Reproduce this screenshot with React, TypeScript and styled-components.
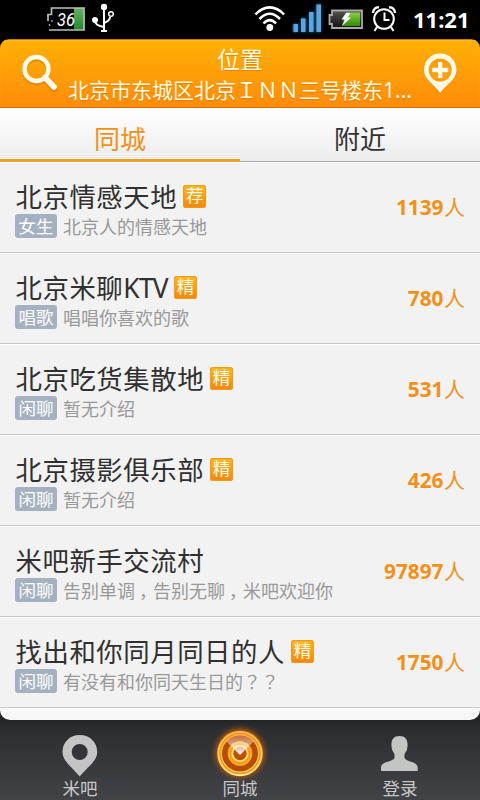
import React from 'react';
import styled, { createGlobalStyle } from 'styled-components';

const Global = createGlobalStyle`
  *, *::before, *::after { box-sizing: border-box; }
  html, body { margin: 0; background: #000; }
  body { font-family: "Noto Sans", "Noto Sans CJK SC", sans-serif; }
`;

const Screen = styled.div`
  width: 480px;
  height: 800px;
  display: flex;
  flex-direction: column;
  overflow: hidden;
  background: #000;
`;

const StatusBar = styled.div`
  flex: none;
  height: 39px;
  display: flex;
  justify-content: space-between;
  svg { display: block; }
`;

const Clock = styled.span`
  width: 72px;
  padding: 4px 0 0 5px;
  color: #fff;
  font: 700 22px/30px "Noto Sans", sans-serif;
  white-space: nowrap;
`;

const StatusGroup = styled.div`
  display: flex;
`;

const Panel = styled.div`
  flex: none;
  height: 681px;
  overflow: hidden;
  border-radius: 9px 9px 0 0;
`;

const Header = styled.header`
  height: 69px;
  display: flex;
  justify-content: space-between;
  border-top: 1px solid #c67a00;
  border-bottom: 1px solid #cf6f00;
  background: linear-gradient(#ffb004, #ff8c0a);
  box-shadow: inset 0 1px 1px #ffbe2c;
`;

const HeaderText = styled.div`
  width: 346px;
  display: flex;
  flex-direction: column;
  align-items: center;
  color: #fffbe0;
  text-shadow: 0 1px 1px rgba(190, 90, 0, 0.45);
`;

const HeaderTitle = styled.div`
  margin-top: 5px;
  font-size: 23px;
  line-height: 28px;
`;

const HeaderAddress = styled.div`
  font-size: 21px;
  line-height: 30px;
  margin-top: 2px;
  white-space: nowrap;
`;

const Tabs = styled.nav`
  height: 54px;
  display: grid;
  grid-template-columns: 1fr 1fr;
  background: linear-gradient(#fff, #ececec);
`;

const Tab = styled.div<{ $active?: boolean }>`
  display: flex;
  align-items: center;
  justify-content: center;
  padding-top: ${(p) => (p.$active ? 10 : 8)}px;
  font-size: 26px;
  line-height: 38px;
  color: ${(p) => (p.$active ? '#f39019' : '#333')};
  border-bottom: ${(p) => (p.$active ? '3px solid #e9a02f' : '1px solid #a9a9a9')};
`;

const List = styled.main`
  height: 558px;
  overflow: hidden;
  border-radius: 0 0 10px 10px;
  background: #f8f8f8;
`;

const Row = styled.article`
  height: 91px;
  display: flex;
  justify-content: space-between;
  align-items: center;
  padding: 0 15px;
  border-top: 1px solid #fff;
  border-bottom: 1px solid #c8c8c8;
  background: #f2f2f2;
`;

const RowBody = styled.div`
  display: flex;
  flex-direction: column;
  padding-top: 5px;
`;

const Line = styled.div<{ $height: number }>`
  display: flex;
  align-items: center;
  gap: 6px;
  height: ${(p) => p.$height}px;
`;

const Name = styled.h2`
  margin: 0;
  padding-left: 0.5px;
  color: #303030;
  font-size: 26.4px;
  font-weight: 400;
  letter-spacing: 0.55px;
  line-height: 34px;
  white-space: nowrap;
`;

const Latin = styled.span`
  letter-spacing: -0.7px;
`;

const Mark = styled.span`
  width: 23px;
  height: 23px;
  margin-top: -1px;
  border-radius: 3px;
  color: #fffbe8;
  background: linear-gradient(#fbb91f, #f5850c);
  box-shadow: inset 0 0 0 1px #ee9a1c;
  font-size: 17.5px;
  line-height: 21px;
  text-align: center;
`;

const Category = styled.span`
  width: 42px;
  height: 24px;
  border-radius: 3px;
  background: #a5b1c1;
  color: #fff;
  font-size: 17.5px;
  line-height: 24px;
  text-align: center;
`;

const Description = styled.span`
  margin-top: -1px;
  color: #999;
  font: 400 18px/24px "Noto Sans CJK TC", sans-serif;
  white-space: nowrap;
`;

const Han = styled.span`
  font-family: "Noto Sans CJK SC", sans-serif;
`;

const Comma = styled(Han)`
  margin-left: 4px;
  letter-spacing: -4px;
`;

const Count = styled.span`
  margin-top: -1px;
  color: #f39019;
  font-size: 21px;
  line-height: 28px;
  white-space: nowrap;
  b { font-size: 20.8px; margin-right: 0.5px; }
`;

const BottomNav = styled.nav`
  flex: none;
  height: 92px;
  margin-top: -12px;
  padding-top: 12px;
  display: grid;
  grid-template-columns: repeat(3, 1fr);
  background: linear-gradient(#242527 12px, #2c2d2f 20px, #424347);
`;

const NavItem = styled.div`
  display: flex;
  flex-direction: column;
  align-items: center;
  color: #c8c8c8;
  font-size: 17.5px;
  line-height: 25px;
  svg { display: block; flex: none; height: 56px; overflow: visible; }
`;

const Content = styled.div`
  position: relative;
  z-index: 1;
`;

type Room = { name: string; mark?: string; category: string; text: string; count: number };

const rooms: Room[] = [
  { name: '北京情感天地', mark: '荐', category: '女生', text: '北京人的情感天地', count: 1139 },
  { name: '北京米聊KTV', mark: '精', category: '唱歌', text: '唱唱你喜欢的歌', count: 780 },
  { name: '北京吃货集散地', mark: '精', category: '闲聊', text: '暂无介绍', count: 531 },
  { name: '北京摄影俱乐部', mark: '精', category: '闲聊', text: '暂无介绍', count: 426 },
  { name: '米吧新手交流村', category: '闲聊', text: '告别单调，告别无聊，米吧欢迎你', count: 97897 },
  { name: '找出和你同月同日的人', mark: '精', category: '闲聊', text: '有没有和你同天生日的？？', count: 1750 },
];

const nameParts = (name: string) =>
  name.split(/([A-Z]+)/).map((part, i) => (i % 2 ? <Latin key={i}>{part}</Latin> : part));

// Commas sit low and slightly right in their cell; question marks are centred.
const textParts = (text: string) =>
  text.split(/(，|？+)/).filter(Boolean).map((part, i) => {
    if (part === '，') return <Comma key={i}>{part}</Comma>;
    return part[0] === '？' ? part : <Han key={i}>{part}</Han>;
  });

const StatusText = styled.text`
  font: italic 400 19px "Roboto", sans-serif;
  fill: #fff;
`;

const LeftStatus = () => (
  <svg width="130" height="39" viewBox="0 0 130 39">
    <defs>
      <linearGradient id="charge" x2="0" y2="1">
        <stop stopColor="#62b262" />
        <stop offset="1" stopColor="#218a2b" />
      </linearGradient>
    </defs>
    <rect x="74" y="8" width="9.500" height="21.500" fill="url(#charge)" />
    <path d="M48 21V14.500H51.500V8H84V30H49" fill="none" stroke="#b9c2b9" strokeWidth="1.700" />
    <path d="M49 24l1 2M52 20v2" stroke="#ddd" />
    <StatusText x="57" y="25.500" textLength="18" lengthAdjust="spacingAndGlyphs">36</StatusText>
    <g fill="none" stroke="#fff" strokeWidth="2">
      <path d="M104 7V31M95 20C95 24 97 25.500 104 27M110 17C110 20 108 21.500 104 23" />
      <circle cx="111" cy="14" r="2.300" strokeWidth="1.500" />
      <path d="M101 31H107" />
    </g>
    <circle cx="104" cy="7" r="3.200" fill="#fff" />
    <circle cx="95" cy="20" r="3" fill="#fff" />
  </svg>
);

const RightStatus = () => (
  <svg width="158" height="39" viewBox="250 0 158 39">
    <defs>
      <linearGradient id="green" x2="0" y2="1">
        <stop stopColor="#8ccf45" />
        <stop offset="1" stopColor="#2f8a08" />
      </linearGradient>
      <linearGradient id="cell" x2="0" y2="1">
        <stop stopColor="#555" />
        <stop offset="1" stopColor="#111" />
      </linearGradient>
      <filter id="blueGlow" x="-20%" y="-20%" width="140%" height="140%">
        <feGaussianBlur stdDeviation="1.500" />
      </filter>
    </defs>
    <g fill="none" stroke="#fff" strokeWidth="2.600">
      <path d="M255.500 14.500C264 5 275.500 5 284 14.500" />
      <path d="M259.500 19C266 12 273.500 12 280 19" />
      <path d="M263.500 23.500C267.500 19 272 19 276 23.500" />
    </g>
    <circle cx="269.800" cy="27.500" r="3.400" fill="#fff" />
    <path d="M293 24h5v8h-5zM301 18h5v14h-5zM309 12h5v20h-5zM316 4h5v28h-5z" fill="#2469a8" filter="url(#blueGlow)" />
    <path d="M293.500 24h4.500v8h-4.500zM301 18.500h4.500v13.500h-4.500zM309 12h4.500v20h-4.500zM316.500 4.500h4.500v27.500h-4.500z" fill="#5ca6dd" />
    <path d="M329.500 15H332V10.500H362V28H332V24H329.500Z" fill="url(#cell)" stroke="#aaa" strokeWidth="1.800" />
    <path d="M346 12.500H360V26H342Z" fill="url(#green)" />
    <path d="M346 13L341.500 19.500H345L342 26L351 17.500H347.500L350.500 13Z" fill="#fff" />
    <g fill="none" stroke="#fff" strokeWidth="2">
      <circle cx="384" cy="19" r="9.800" />
      <path d="M384.500 12.500V20H389.500M377 27l-2.500 4M391 27l2.500 4" />
      <path d="M373 13C373 9 376 7 379 7.500M395 13C395 9 392 7 389 7.500" strokeWidth="2.400" />
    </g>
  </svg>
);

const SearchIcon = () => (
  <svg width="67" height="67" viewBox="0 40 67 67">
    <g fill="none" stroke="#b75f00" opacity=".35" transform="translate(0 1)">
      <circle cx="36.500" cy="69.500" r="12" strokeWidth="5" />
      <path d="M46.500 80L54 88" strokeWidth="6.500" strokeLinecap="round" />
    </g>
    <g fill="none" stroke="#fffbea">
      <circle cx="36.500" cy="69" r="12" strokeWidth="4.500" />
      <path d="M45 77.500L54 87" strokeWidth="5.800" strokeLinecap="round" />
    </g>
  </svg>
);

const PlusPinIcon = () => (
  <svg width="67" height="67" viewBox="413 40 67 67">
    <path d="M440 54C430.500 54 424 61 424 70C424 79 432 82 440 94C448 82 456.500 79 456.500 70C456.500 61 450 54 440 54Z" fill="#b75f00" opacity=".4" />
    <path d="M440.200 53.500C430.500 53.500 424 61 424 70C424 79.500 433 83 440.200 93C447.500 83 456.500 79.500 456.500 70C456.500 61 450 53.500 440.200 53.500Z" fill="#fffbea" />
    <circle cx="440.200" cy="70" r="11.500" fill="#fd9e0b" />
    <path d="M440.200 62V78M432.200 70H448.200" stroke="#fffbea" strokeWidth="4.300" />
  </svg>
);

const PinIcon = () => (
  <svg width="60" height="56" viewBox="50 720 60 56">
    <path fillRule="evenodd" d="M79.700 735C69.500 735 62.500 742.500 62.500 752C62.500 760.500 69 764 79.700 776.500C90.500 764 97.200 760.500 97.200 752C97.200 742.500 90 735 79.700 735ZM79.700 744A8 8 0 1 1 79.700 760A8 8 0 1 1 79.700 744Z" fill="#c4c4c4" />
  </svg>
);

const RadarIcon = () => (
  <svg width="60" height="56" viewBox="210 720 60 56">
    <defs>
      <filter id="glow" x="-50%" y="-50%" width="200%" height="200%">
        <feGaussianBlur stdDeviation="3" />
      </filter>
      <linearGradient id="beam" x2="0" y2="1">
        <stop stopColor="#fff" stopOpacity=".2" />
        <stop offset=".5" stopColor="#fff" stopOpacity=".5" />
        <stop offset="1" stopColor="#fff" />
      </linearGradient>
      <linearGradient id="ring" x2="0" y2="1">
        <stop stopColor="#ffb44c" />
        <stop offset=".8" stopColor="#ffdd68" />
        <stop offset="1" stopColor="#ffef9a" />
      </linearGradient>
    </defs>
    <circle cx="240" cy="753" r="23.500" fill="#f36a00" filter="url(#glow)" opacity=".9" />
    <circle cx="240" cy="753.500" r="22.700" fill="url(#ring)" />
    <circle cx="240" cy="753.500" r="20" fill="none" stroke="#f59013" strokeWidth="1.500" />
    <circle cx="240" cy="753.500" r="18" fill="#b84c05" />
    <circle cx="240" cy="753.500" r="12.300" fill="#ffb02c" />
    <circle cx="240" cy="753.500" r="9.800" fill="none" stroke="#f08b15" strokeWidth="1" />
    <circle cx="240" cy="753.500" r="7.500" fill="#bd5107" stroke="#ffe07b" strokeWidth="1.600" />
    <path d="M240 755L226.500 741.500A18 18 0 0 1 253.500 741.500Z" fill="url(#beam)" />
  </svg>
);

const UserIcon = () => (
  <svg width="60" height="56" viewBox="370 720 60 56">
    <path d="M399.500 736C393.500 736 391 740 391.500 746C391.800 750 393 752 394.500 754V758C393 762 382 761 381 767V771H417.700V767C416.500 761 406 762 404.500 758V754C406 752 407.300 750 407.500 746C408 740 405.500 736 399.500 736Z" fill="#c4c4c4" />
  </svg>
);

export default function App() {
  return (
    <Screen>
      <Global />
      <StatusBar>
        <LeftStatus />
        <StatusGroup>
          <RightStatus />
          <Clock>11:21</Clock>
        </StatusGroup>
      </StatusBar>
      <Content>
        <Panel>
          <Header>
            <SearchIcon />
            <HeaderText>
              <HeaderTitle>位置</HeaderTitle>
              <HeaderAddress>北京市东城区北京ＩＮＮ三号楼东1...</HeaderAddress>
            </HeaderText>
            <PlusPinIcon />
          </Header>
          <Tabs>
            <Tab $active>同城</Tab>
            <Tab>附近</Tab>
          </Tabs>
          <List>
            {rooms.map((room) => (
              <Row key={room.name}>
                <RowBody>
                  <Line $height={32}>
                    <Name>{nameParts(room.name)}</Name>
                    {room.mark && <Mark>{room.mark}</Mark>}
                  </Line>
                  <Line $height={26}>
                    <Category>{room.category}</Category>
                    <Description>{textParts(room.text)}</Description>
                  </Line>
                </RowBody>
                <Count><b>{room.count}</b>人</Count>
              </Row>
            ))}
          </List>
        </Panel>
      </Content>
      <BottomNav>
        <NavItem><PinIcon />米吧</NavItem>
        <NavItem><RadarIcon />同城</NavItem>
        <NavItem><UserIcon />登录</NavItem>
      </BottomNav>
    </Screen>
  );
}
